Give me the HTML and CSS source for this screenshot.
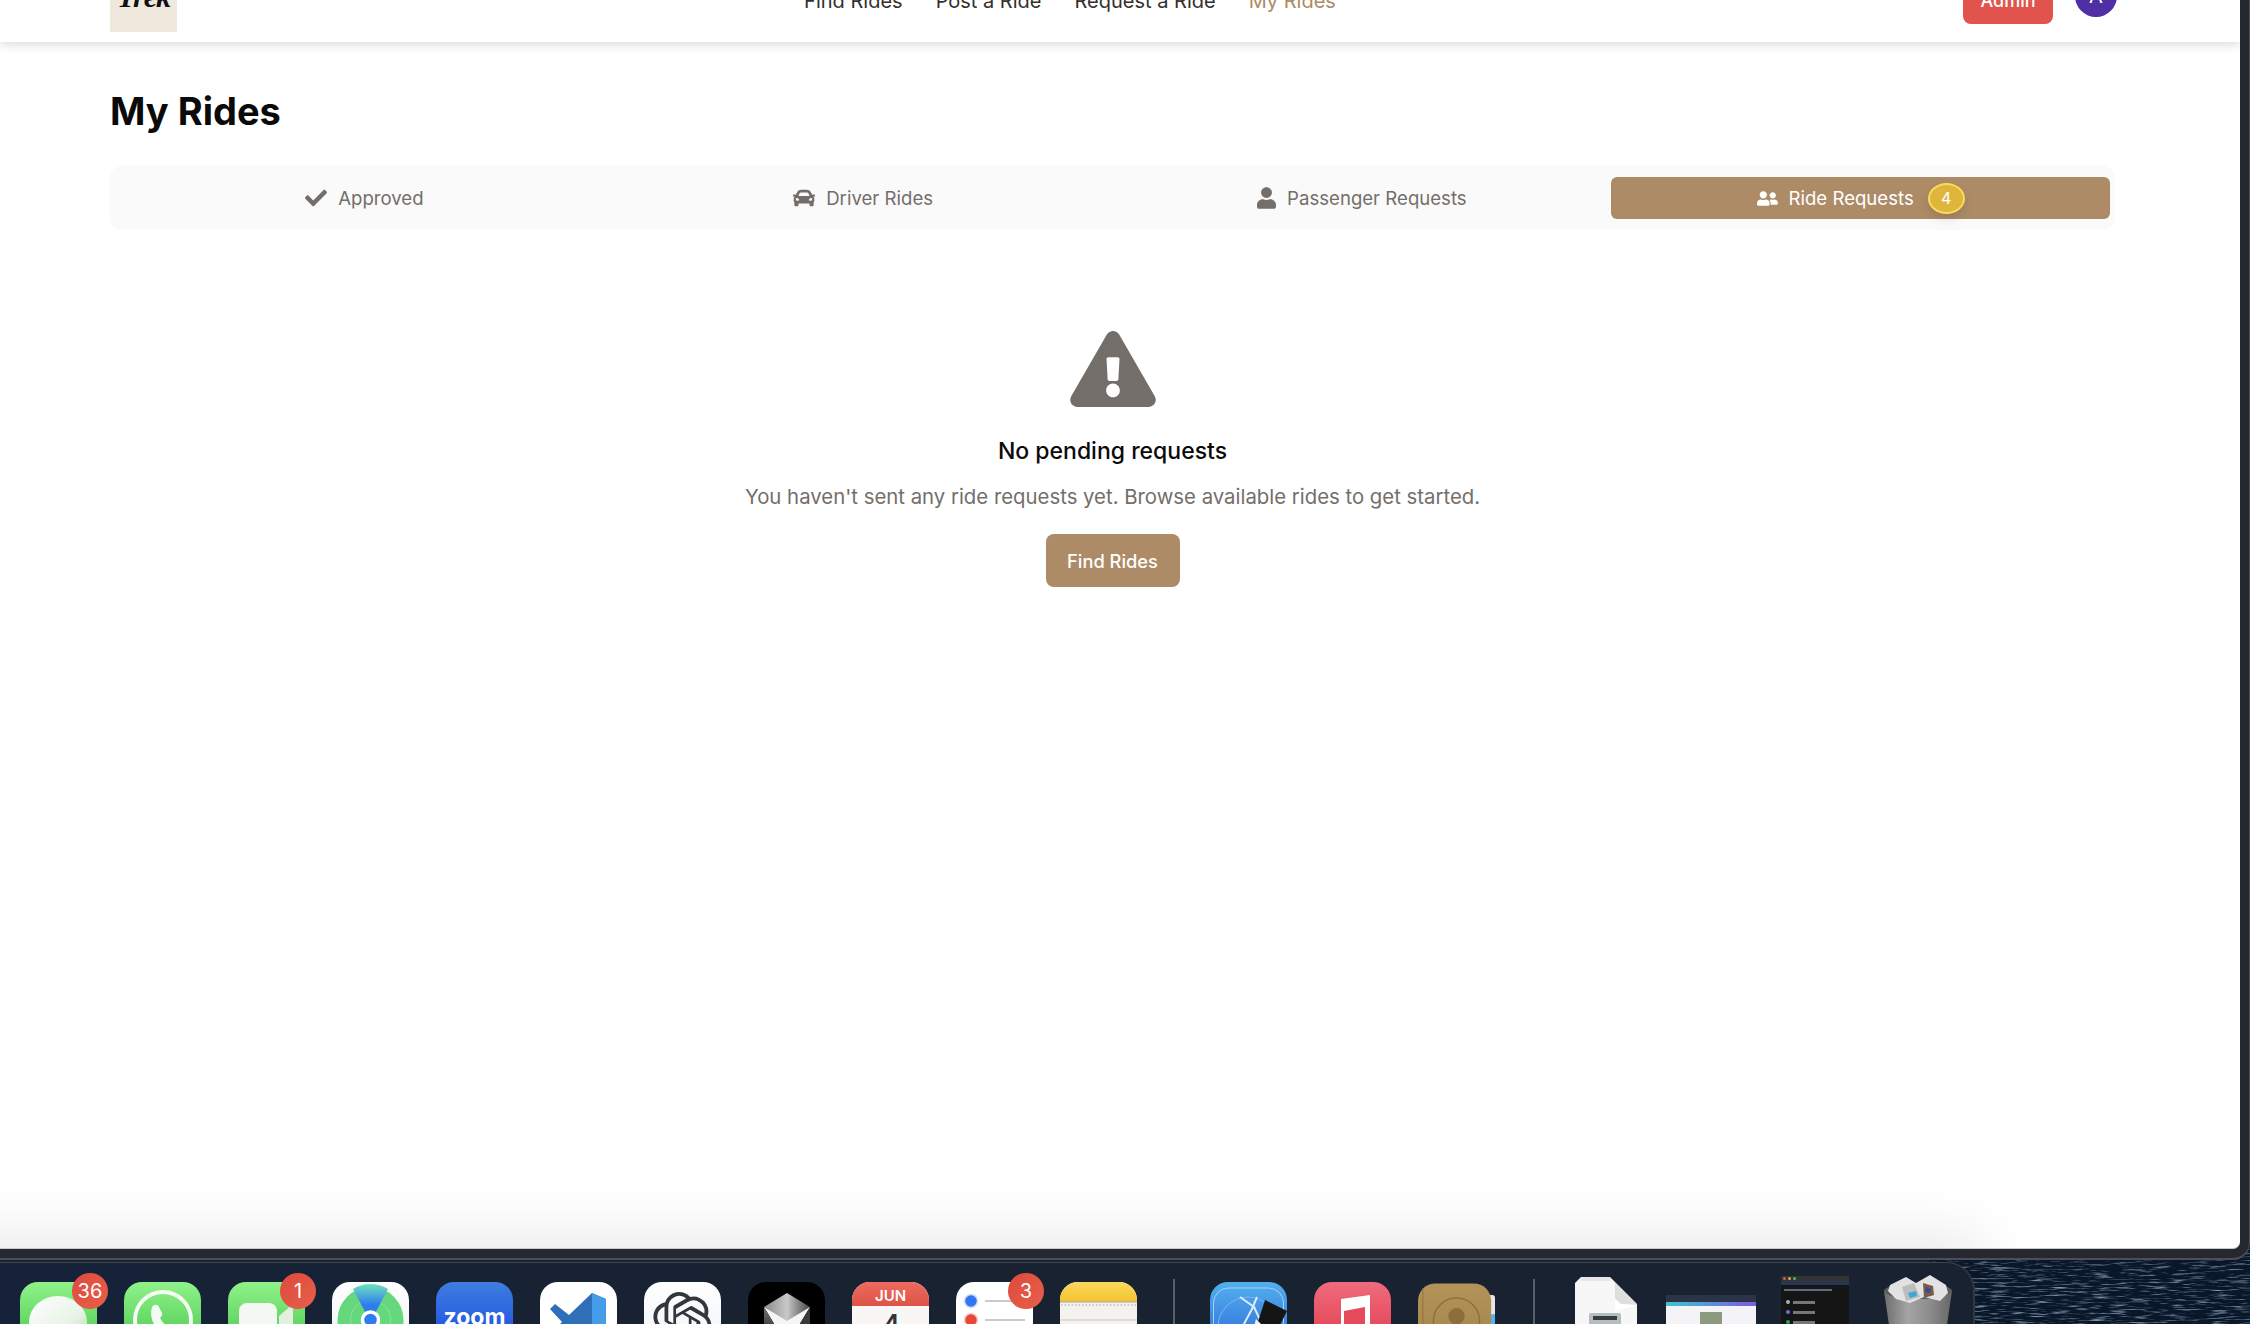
FILE: index.html
```html
<!DOCTYPE html>
<html lang="en">
<head>
<meta charset="utf-8">
<title>My Rides</title>
<link rel="stylesheet" href="styles.css">
</head>
<body>
<svg class="wallpaper" viewBox="0 0 320 80" preserveAspectRatio="none" aria-hidden="true">
  <defs>
    <filter id="water" x="0" y="0" width="100%" height="100%">
      <feTurbulence type="fractalNoise" baseFrequency="0.05 0.55" numOctaves="3" seed="7"/>
      <feColorMatrix type="matrix" values="0 0 0 0 0.36  0 0 0 0 0.5  0 0 0 0 0.66  2.2 0 0 0 -1.12"/>
    </filter>
  </defs>
  <rect width="320" height="80" fill="#0a1729"/>
  <rect width="320" height="80" filter="url(#water)"/>
</svg>

<div class="frame">
  <div class="window">
    <header class="topbar">
      <div class="logo"><span class="logo-text">Trek</span></div>
      <nav class="nav">
        <a class="nav-link">Find Rides</a>
        <a class="nav-link">Post a Ride</a>
        <a class="nav-link">Request a Ride</a>
        <a class="nav-link nav-active">My Rides</a>
      </nav>
      <div class="account">
        <button class="admin">Admin</button>
        <div class="avatar">A</div>
      </div>
    </header>

    <main class="page">
      <h1 class="title">My Rides</h1>
      <div class="tabs">
        <div class="tab">
          <svg class="tab-icon icon-check" viewBox="0 0 512 512"><path d="M173.898 439.404l-166.4-166.4c-9.997-9.997-9.997-26.206 0-36.204l36.203-36.204c9.997-10 26.207-10 36.204 0L192 312.69 432.095 72.596c9.997-9.997 26.207-9.997 36.204 0l36.203 36.204c9.997 9.997 9.997 26.206 0 36.204l-294.4 294.401c-9.998 9.997-26.207 9.997-36.204-.001z"/></svg>
          <span>Approved</span>
        </div>
        <div class="tab">
          <svg class="tab-icon icon-car" viewBox="0 0 512 512"><path d="M499.99 176h-59.87l-16.64-41.6C406.38 91.63 365.57 64 319.5 64h-127c-46.06 0-86.88 27.63-103.99 70.4L71.87 176H12.01C4.2 176-1.53 183.34.37 190.91l6 24C7.7 220.25 12.5 224 18.01 224h20.07C24.65 235.73 16 252.78 16 272v48c0 16.12 6.16 30.67 16 41.93V416c0 17.67 14.33 32 32 32h32c17.67 0 32-14.33 32-32v-32h256v32c0 17.67 14.33 32 32 32h32c17.67 0 32-14.33 32-32v-54.07c9.84-11.25 16-25.8 16-41.93v-48c0-19.22-8.65-36.27-22.07-48H494c5.51 0 10.31-3.75 11.64-9.09l6-24c1.89-7.57-3.84-14.91-11.65-14.91zm-352.06-17.83c7.29-18.22 24.94-30.17 44.57-30.17h127c19.63 0 37.28 11.95 44.57 30.17L384 208H128l19.93-49.83zM96 319.8c-19.2 0-32-12.76-32-31.9S76.8 256 96 256s48 28.71 48 47.85-28.8 15.95-48 15.95zm320 0c-19.2 0-48 3.19-48-15.95S396.8 256 416 256s32 12.76 32 31.9-12.8 31.9-32 31.9z"/></svg>
          <span>Driver Rides</span>
        </div>
        <div class="tab">
          <svg class="tab-icon icon-user" viewBox="0 0 448 512"><path d="M224 256c70.7 0 128-57.3 128-128S294.7 0 224 0 96 57.3 96 128s57.3 128 128 128zm89.6 32h-16.7c-22.2 10.2-46.9 16-72.9 16s-50.6-5.8-72.9-16h-16.7C60.2 288 0 348.2 0 422.4V464c0 26.5 21.5 48 48 48h352c26.5 0 48-21.5 48-48v-41.6c0-74.2-60.2-134.4-134.4-134.4z"/></svg>
          <span>Passenger Requests</span>
        </div>
        <div class="tab tab-active">
          <svg class="tab-icon icon-users" viewBox="0 0 640 512"><path d="M192 256c61.9 0 112-50.1 112-112S253.9 32 192 32 80 82.1 80 144s50.1 112 112 112zm76.8 32h-8.3c-20.8 10-43.9 16-68.5 16s-47.6-6-68.5-16h-8.3C51.6 288 0 339.6 0 403.2V432c0 26.5 21.5 48 48 48h288c26.5 0 48-21.5 48-48v-28.8c0-63.6-51.6-115.2-115.2-115.2zM480 256c53 0 96-43 96-96s-43-96-96-96-96 43-96 96 43 96 96 96zm48 32h-3.8c-13.9 4.8-28.6 8-44.2 8s-30.3-3.2-44.2-8H432c-20.4 0-39.2 5.9-55.7 15.4 24.4 26.3 39.7 61.2 39.7 99.8v38.4c0 2.2-.5 4.3-.6 6.4H592c26.5 0 48-21.5 48-48 0-61.9-50.1-112-112-112z"/></svg>
          <span>Ride Requests</span>
          <span class="count">4</span>
        </div>
      </div>

      <section class="empty">
        <svg class="empty-icon" viewBox="0 0 576 512"><path d="M569.517 440.013C587.975 472.007 564.806 512 527.94 512H48.054c-36.937 0-59.999-40.055-41.577-71.987L246.423 23.985c18.467-32.009 64.72-31.951 83.154 0l239.94 416.028zM288 354c-25.405 0-46 20.595-46 46s20.595 46 46 46 46-20.595 46-46-20.595-46-46-46zm-43.673-165.346l7.418 136c.347 6.364 5.609 11.346 11.982 11.346h48.546c6.373 0 11.635-4.982 11.982-11.346l7.418-136c.375-6.874-5.098-12.654-11.982-12.654h-63.383c-6.884 0-12.356 5.78-11.981 12.654z"/></svg>
        <h2 class="empty-title">No pending requests</h2>
        <p class="empty-text">You haven't sent any ride requests yet. Browse available rides to get started.</p>
        <button class="find">Find Rides</button>
      </section>
    </main>
    <div class="dock-shade"></div>
  </div>
</div>

<div class="dock">
  <div class="app">
    <svg viewBox="0 0 77 77"><defs><linearGradient id="g1" x1="0" y1="0" x2="0" y2="1"><stop offset="0" stop-color="#90f28a"/><stop offset=".6" stop-color="#5ed460"/></linearGradient><linearGradient id="w1" x1="0" y1="0" x2="1" y2="1"><stop offset="0" stop-color="#fff"/><stop offset=".6" stop-color="#e8f3e6"/><stop offset="1" stop-color="#a9d9a4"/></linearGradient></defs><rect width="77" height="77" rx="18" fill="url(#g1)"/><ellipse cx="38" cy="40" rx="29" ry="26" fill="url(#w1)"/></svg>
    <span class="badge">36</span>
  </div>
  <div class="app">
    <svg viewBox="0 0 77 77"><rect width="77" height="77" rx="18" fill="url(#g1)"/><circle cx="39" cy="38" r="28" fill="none" stroke="#f4fbf2" stroke-width="4"/><path d="M28 25c2-3 6-3 7 0l3 6c.5 2-.5 3-2 5 2 4 5 7 9 9 2-2 3-3 5-2l6 3c2 1 2 4 0 6-3 3-7 4-11 2C34 51 24 39 28 25z" fill="#f4fbf2"/></svg>
  </div>
  <div class="app">
    <svg viewBox="0 0 77 77"><rect width="77" height="77" rx="18" fill="url(#g1)"/><rect x="11" y="21" width="38" height="40" rx="8" fill="#f4f7f2"/><path d="M51 34l14-12v40L51 50z" fill="#e3efe0"/></svg>
    <span class="badge">1</span>
  </div>
  <div class="app">
    <svg viewBox="0 0 77 77"><defs><linearGradient id="w2" x1="0" y1="0" x2="0" y2="1"><stop offset="0" stop-color="#fff"/><stop offset="1" stop-color="#eee"/></linearGradient><linearGradient id="b1" x1="0" y1="0" x2="0" y2="1"><stop offset="0" stop-color="#6ee3bc"/><stop offset=".55" stop-color="#2f7cf0"/></linearGradient></defs><rect width="77" height="77" rx="18" fill="url(#w2)"/><circle cx="38.5" cy="38" r="33" fill="#65d77c"/><circle cx="38.5" cy="38" r="20" fill="none" stroke="#8be49a" stroke-width="1"/><path d="M21 7a33 33 0 0 1 35 0L38.500 40z" fill="url(#b1)"/><circle cx="38.500" cy="38" r="8" fill="#2f7cf0" stroke="#fff" stroke-width="3.500"/></svg>
  </div>
  <div class="app">
    <svg viewBox="0 0 77 77"><defs><linearGradient id="z1" x1="0" y1="0" x2="0" y2="1"><stop offset="0" stop-color="#3f7de0"/><stop offset=".7" stop-color="#1f53e2"/></linearGradient></defs><rect width="77" height="77" rx="18" fill="url(#z1)"/><text class="svg-zoom" x="38.500" y="43" text-anchor="middle">zoom</text></svg>
  </div>
  <div class="app">
    <svg viewBox="0 0 77 77"><rect width="77" height="77" rx="18" fill="#fff"/><path d="M10 27l5-5 14 11 23-22 14 6v45l-14 6-23-22-14 11-5-5 12-12z" fill="#2f6fb8"/><path d="M52 11l14 6v45l-14 6z" fill="#459ce8"/></svg>
  </div>
  <div class="app">
    <svg viewBox="0 0 77 77"><defs><linearGradient id="w3" x1="0" y1="0" x2="0" y2="1"><stop offset="0" stop-color="#fff"/><stop offset="1" stop-color="#eef1f6"/></linearGradient></defs><rect width="77" height="77" rx="18" fill="url(#w3)"/><path transform="translate(9 10) scale(2.45)" fill="#33363b" d="M22.2819 9.8211a5.9847 5.9847 0 0 0-.5157-4.9108 6.0462 6.0462 0 0 0-6.5098-2.9A6.0651 6.0651 0 0 0 4.9807 4.1818a5.9847 5.9847 0 0 0-3.9977 2.9 6.0462 6.0462 0 0 0 .7427 7.0966 5.98 5.98 0 0 0 .511 4.9107 6.051 6.051 0 0 0 6.5146 2.9001A5.9847 5.9847 0 0 0 13.2599 24a6.0557 6.0557 0 0 0 5.7718-4.2058 5.9894 5.9894 0 0 0 3.9977-2.9001 6.0557 6.0557 0 0 0-.7475-7.0729zm-9.022 12.6081a4.4755 4.4755 0 0 1-2.8764-1.0408l.1419-.0804 4.7783-2.7582a.7948.7948 0 0 0 .3927-.6813v-6.7369l2.02 1.1686a.071.071 0 0 1 .038.052v5.5826a4.504 4.504 0 0 1-4.4945 4.4944zm-9.6607-4.1254a4.4708 4.4708 0 0 1-.5346-3.0137l.142.0852 4.783 2.7582a.7712.7712 0 0 0 .7806 0l5.8428-3.3685v2.3324a.0804.0804 0 0 1-.0332.0615L9.74 19.9502a4.4992 4.4992 0 0 1-6.1408-1.6464zM2.3408 7.8956a4.485 4.485 0 0 1 2.3655-1.9728V11.6a.7664.7664 0 0 0 .3879.6765l5.8144 3.3543-2.0201 1.1685a.0757.0757 0 0 1-.071 0l-4.8303-2.7865A4.504 4.504 0 0 1 2.3408 7.872zm16.5963 3.8558L13.1038 8.364 15.1192 7.2a.0757.0757 0 0 1 .071 0l4.8303 2.7913a4.4944 4.4944 0 0 1-.6765 8.1042v-5.6772a.79.79 0 0 0-.407-.667zm2.0107-3.0231l-.142-.0852-4.7735-2.7818a.7759.7759 0 0 0-.7854 0L9.409 9.2297V6.8974a.0662.0662 0 0 1 .0284-.0615l4.8303-2.7866a4.4992 4.4992 0 0 1 6.6802 4.66zM8.3065 12.863l-2.02-1.1638a.0804.0804 0 0 1-.038-.0567V6.0742a4.4992 4.4992 0 0 1 7.3757-3.4537l-.142.0805L8.704 5.459a.7948.7948 0 0 0-.3927.6813zm1.0976-2.3654l2.602-1.4998 2.6069 1.4998v2.9994l-2.5974 1.4997-2.6067-1.4997Z"/></svg>
  </div>
  <div class="app">
    <svg viewBox="0 0 77 77"><defs><linearGradient id="k1" x1="0" y1="0" x2="1" y2="0"><stop offset="0" stop-color="#8b8b8b"/><stop offset=".5" stop-color="#c8c8c8"/><stop offset="1" stop-color="#444"/></linearGradient><linearGradient id="k2" x1="0" y1="0" x2="0" y2="1"><stop offset="0" stop-color="#777"/><stop offset="1" stop-color="#222"/></linearGradient></defs><rect width="77" height="77" rx="18" fill="#000"/><path d="M39 11L16 25l23 17 23-17z" fill="url(#k1)"/><path d="M16 25l23 14 23-14-12 20H28z" fill="#f5f5f5"/><path d="M16 25l12 20 11 10-23-8z" fill="url(#k2)"/><path d="M62 25L50 45 39 55l23-8z" fill="#3a3a3a"/></svg>
  </div>
  <div class="app">
    <svg viewBox="0 0 77 77"><defs><linearGradient id="r1" x1="0" y1="0" x2="0" y2="1"><stop offset="0" stop-color="#ee6a5f"/><stop offset="1" stop-color="#dd5347"/></linearGradient></defs><rect width="77" height="77" rx="18" fill="#f8f7f6"/><path d="M0 24V18A18 18 0 0 1 18 0h41a18 18 0 0 1 18 18v6z" fill="url(#r1)"/><text class="svg-month" x="38.500" y="19" text-anchor="middle">JUN</text><text class="svg-day" x="38.500" y="58" text-anchor="middle">4</text></svg>
  </div>
  <div class="app">
    <svg viewBox="0 0 77 77"><rect width="77" height="77" rx="18" fill="#fff"/><circle cx="15" cy="19" r="6.500" fill="#2f76f0" stroke="#cfe0fb" stroke-width="1.500"/><circle cx="15" cy="38" r="6.500" fill="#e8483a" stroke="#f8cfcb" stroke-width="1.500"/><path d="M29 19h40M29 38h40" stroke="#b9b9b9" stroke-width="1.500"/></svg>
    <span class="badge">3</span>
  </div>
  <div class="app">
    <svg viewBox="0 0 77 77"><defs><linearGradient id="y1" x1="0" y1="0" x2="0" y2="1"><stop offset="0" stop-color="#fbd95c"/><stop offset="1" stop-color="#f5c32f"/></linearGradient></defs><rect width="77" height="77" rx="18" fill="#f4f2ef"/><path d="M0 20A18 18 0 0 1 18 0h41a18 18 0 0 1 18 18v2z" fill="url(#y1)"/><path d="M0 20h77" stroke="#a9a9a9" stroke-width="1"/><path d="M1 23h75" stroke="#bdbdbd" stroke-width="1.500" stroke-dasharray="1.500 2"/><path d="M0 38h77" stroke="#dedcd9" stroke-width="2"/></svg>
  </div>
  <div class="sep sep-first"></div>
  <div class="app">
    <svg viewBox="0 0 77 77"><defs><linearGradient id="x1" x1="0" y1="0" x2="0" y2="1"><stop offset="0" stop-color="#52b0ee"/><stop offset=".7" stop-color="#3576dc"/></linearGradient></defs><rect width="77" height="77" rx="18" fill="url(#x1)"/><rect x="3.500" y="6" width="70" height="70" rx="15" fill="none" stroke="#a5d3f5" stroke-width="1"/><circle cx="38" cy="45" r="30" fill="none" stroke="#7fb6ec" stroke-width="1"/><path d="M30 15l14 10 14 30M47 15L42 27 27 55" fill="none" stroke="#dcecfb" stroke-width="2"/><path d="M56 19l22 11-11 22-6 3-14-8z" fill="#151515" transform="translate(-1 -1)"/><path d="M46 37l6 6-4 11-6-3z" fill="#eee"/></svg>
  </div>
  <div class="app">
    <svg viewBox="0 0 77 77"><defs><linearGradient id="m1" x1="0" y1="0" x2="0" y2="1"><stop offset="0" stop-color="#ef6b7d"/><stop offset=".6" stop-color="#e54a5c"/></linearGradient></defs><rect width="77" height="77" rx="18" fill="url(#m1)"/><path d="M27 17l29-4v50H27z" fill="#fff"/><path d="M30 29l21-4v40H30z" fill="#e54a5c"/></svg>
  </div>
  <div class="app">
    <svg viewBox="0 0 80 77"><defs><linearGradient id="c1" x1="0" y1="0" x2="0" y2="1"><stop offset="0" stop-color="#b39358"/><stop offset="1" stop-color="#a4824a"/></linearGradient></defs><rect x="70" y="12" width="10" height="22" rx="3" fill="#e7e6e2"/><rect x="70" y="32" width="10" height="24" fill="#56b1f0"/><rect width="76" height="77" rx="18" fill="url(#c1)"/><path d="M5 5v68" stroke="#8f713d" stroke-width="1"/><circle cx="40" cy="39" r="24" fill="none" stroke="#8c6e3c" stroke-width="1.500"/><circle cx="40" cy="34" r="8.500" fill="#8c6e3c"/></svg>
  </div>
  <div class="sep sep-second"></div>
  <div class="doc">
    <svg viewBox="0 0 62 70"><path d="M6 2h29l27 27v41H0V8z" fill="#f7f7f7"/><path d="M6 2h29v4H6z" fill="#e6e6e6"/><path d="M40 8l22 22-16-1-6-5z" fill="#dedede"/><path d="M40 24l6 5 16 1-22 6z" fill="#fff"/><rect x="14" y="38" width="32" height="32" rx="2" fill="#b4bdbf"/><rect x="18" y="41" width="24" height="4" fill="#3a3d40"/></svg>
  </div>
  <div class="thumb-light">
    <div class="thumb-bar"></div>
    <div class="thumb-strip"></div>
    <div class="thumb-body"><div class="thumb-map"></div></div>
  </div>
  <div class="thumb-dark">
    <div class="dark-title"><i class="dot dot-r"></i><i class="dot dot-y"></i><i class="dot dot-g"></i></div>
    <div class="dark-url"></div>
    <div class="dark-line"></div>
    <div class="dark-row"><i class="dark-dot dot-a"></i><i class="dark-text"></i></div>
    <div class="dark-row"><i class="dark-dot dot-b"></i><i class="dark-text"></i></div>
    <div class="dark-row"><i class="dark-dot dot-c"></i><i class="dark-text"></i></div>
  </div>
  <div class="trash">
    <svg viewBox="0 0 68 50"><defs><linearGradient id="t1" x1="0" y1="0" x2="1" y2="0"><stop offset="0" stop-color="#6d6d6d"/><stop offset=".35" stop-color="#a4a4a4"/><stop offset=".7" stop-color="#8a8a8a"/><stop offset="1" stop-color="#666"/></linearGradient></defs><path d="M0 16h68l-5 34H5z" fill="url(#t1)"/><ellipse cx="34" cy="16" rx="34" ry="8" fill="#5d5d5d"/><path d="M6 10l16-8 10 6 14-8 16 10 2 8-8 8-16-4-14 6-14-4-8-8z" fill="#e2e2e2"/><path d="M18 12l12-4 6 14-14 4z" fill="#bdbdbd"/><path d="M24 18l8-2 1 5-7 2z" fill="#3fa7d6"/><path d="M39 8l10 3 1 9-10 3z" fill="#7c5a44"/><path d="M42 12l5 2-1 4-5-1z" fill="#2f4f9a"/></svg>
  </div>
</div>
</body>
</html>
```

FILE: styles.css
```css
* { box-sizing: border-box; }
html, body { margin: 0; padding: 0; }
body {
  position: relative;
  width: 2250px;
  height: 1324px;
  overflow: hidden;
  background: #1a2230;
  font-family: Inter, "Noto Sans", sans-serif;
}
.wallpaper {
  position: absolute;
  right: 0;
  bottom: 0;
  width: 320px;
  height: 80px;
}

/* Browser window and its frame */
.frame {
  position: relative;
  height: 1260px;
  padding: 0 9px 9px 0;
  background: #262831;
  border-bottom: 2px solid #4c4e58;
  border-right: 1px solid #4c4e58;
  border-bottom-right-radius: 17px;
}
.window {
  position: relative;
  height: 1249px;
  overflow: hidden;
  background: #fff;
  border-bottom: 1px solid #c9c9c9;
  border-bottom-right-radius: 7px;
}
.dock-shade {
  position: absolute;
  left: -60px;
  bottom: -24px;
  width: 2040px;
  height: 24px;
  border-radius: 30px;
  box-shadow: 0 0 58px 6px rgba(0, 0, 0, .13);
}

/* Top bar, scrolled partly out of view */
.topbar {
  position: relative;
  z-index: 1;
  display: flex;
  align-items: center;
  justify-content: space-between;
  height: 87px;
  margin-top: -45px;
  padding: 0 123px 0 110px;
  background: #fff;
  box-shadow: 0 2px 10px rgba(0, 0, 0, .16);
}
.logo {
  display: flex;
  align-items: flex-end;
  justify-content: center;
  width: 67px;
  height: 67px;
  padding-bottom: 20px;
  background: #efe9dd;
}
.logo-text {
  font: italic 700 30px/1 "Liberation Serif", serif;
  color: #111;
  letter-spacing: -1px;
}
.nav { display: flex; gap: 33px; margin-top: 5px; }
.nav-link { font-size: 20px; line-height: 24px; color: #33302d; }
.nav-active { color: #ad8b67; }
.account { display: flex; align-items: center; gap: 22px; }
.admin {
  width: 90px;
  height: 51px;
  padding: 4px 0 0;
  border: 0;
  border-radius: 8px;
  background: #e0544d;
  color: #fff;
  font: 500 18px Inter, sans-serif;
}
.avatar {
  display: flex;
  align-items: center;
  justify-content: center;
  width: 42px;
  height: 42px;
  margin-bottom: 5px;
  border-radius: 50%;
  background: #4f2ea6;
  color: #fff;
  font-size: 20px;
}

/* Page */
.page { width: 2115px; padding-left: 110px; }
.title {
  margin: 47px 0 33px;
  font-size: 38px;
  line-height: 44px;
  font-weight: 700;
  color: #0c0a09;
}
.tabs {
  display: grid;
  grid-template-columns: repeat(4, 1fr);
  height: 64px;
  padding: 11px 5px;
  border-radius: 12px;
  background: #fafafa;
}
.tab {
  display: flex;
  align-items: center;
  justify-content: center;
  gap: 11px;
  border-radius: 6px;
  font-size: 18.6px;
  font-weight: 400;
  color: #736e69;
}
.tab-icon { fill: currentColor; display: block; }
.icon-check { width: 22px; height: 22px; }
.icon-car { width: 22px; height: 22px; }
.icon-user { width: 19px; height: 22px; }
.icon-users { width: 21px; height: 17px; }
.tab-active { background: #ad8b67; color: #fff; }
.count {
  display: flex;
  align-items: center;
  justify-content: center;
  width: 37px;
  height: 31px;
  margin-left: 3px;
  border: 2px solid #f6dc5c;
  border-radius: 50%;
  background: #e0b53c;
  box-shadow: 0 6px 10px rgba(0, 0, 0, .1);
  color: #fff;
  font-size: 16px;
}

/* Empty state */
.empty {
  display: flex;
  flex-direction: column;
  align-items: center;
  padding-top: 101px;
}
.empty-icon { display: block; width: 86px; height: 76px; fill: #736e69; }
.empty-title {
  margin: 28px 0 0;
  font-size: 23px;
  line-height: 32px;
  font-weight: 500;
  color: #0c0a09;
}
.empty-text {
  margin: 15px 0 0;
  font-size: 20.35px;
  line-height: 30px;
  color: #736e69;
}
.find {
  width: 134px;
  height: 53px;
  margin-top: 22px;
  border: 0;
  border-radius: 8px;
  background: #ad8b67;
  color: #fff;
  font: 500 18.3px Inter, sans-serif;
}

/* Dock */
.dock {
  position: relative;
  display: flex;
  align-items: flex-start;
  width: 1975px;
  height: 62px;
  margin-top: 2px;
  padding: 19px 0 0 20px;
  gap: 27px;
  overflow: hidden;
  background: linear-gradient(90deg, #152238, #192230 45%);
  border-top: 1px solid #3d4450;
  border-right: 2px solid #2f3744;
  border-top-right-radius: 28px;
}
.app { position: relative; flex: none; width: 77px; height: 77px; }
.app svg { display: block; width: 100%; height: 100%; overflow: visible; }
.badge {
  position: absolute;
  top: -9px;
  right: -11px;
  display: flex;
  align-items: center;
  justify-content: center;
  width: 36px;
  height: 36px;
  border-radius: 50%;
  background: linear-gradient(135deg, #dd4a3c, #e8604a);
  color: #fff;
  font-size: 20px;
}
.svg-zoom { font: 700 23px Inter, sans-serif; fill: #fff; }
.svg-month { font: 600 15px Inter, sans-serif; fill: #fff; }
.svg-day { font: 400 36px Inter, sans-serif; fill: #333; }
.sep { flex: none; width: 2px; height: 60px; margin-top: -3px; background: #5a606b; }
.sep-first { margin-left: 9px; margin-right: 8px; }
.sep-second { margin-left: 11px; margin-right: 13px; }
.doc { flex: none; width: 62px; height: 70px; margin-top: -7px; }
.doc svg { display: block; width: 100%; height: 100%; }
.thumb-light {
  flex: none;
  width: 90px;
  height: 60px;
  margin-top: 13px;
  margin-left: 2px;
  background: #f4f4f8;
  filter: blur(.4px);
}
.thumb-bar { height: 7px; background: #2b3447; }
.thumb-strip { height: 4px; background: linear-gradient(90deg, #3fc4cf, #7b5ce0); }
.thumb-body { display: flex; justify-content: center; padding-top: 6px; }
.thumb-map { width: 22px; height: 40px; background: #8d9a7d; }
.thumb-dark {
  flex: none;
  width: 68px;
  height: 60px;
  margin: -6px 8px 0 -2px;
  background: #151515;
  filter: blur(.4px);
}
.dark-title { display: flex; gap: 2px; height: 5px; padding: 1px 2px; background: #333; }
.dot { width: 3px; height: 3px; border-radius: 50%; }
.dot-r { background: #d8584f; }
.dot-y { background: #d6b13f; }
.dot-g { background: #5cb85c; }
.dark-url { height: 4px; background: #2a3550; }
.dark-line { width: 48px; height: 2px; margin: 4px 0 6px 3px; background: #5d6a80; }
.dark-row { display: flex; align-items: center; gap: 3px; height: 10px; padding-left: 5px; }
.dark-dot { width: 4px; height: 4px; border-radius: 50%; }
.dot-a { background: #9bb7c4; }
.dot-b { background: #6a72e0; }
.dot-c { background: #2f9b6d; }
.dark-text { width: 22px; height: 3px; background: #777; }
.trash { flex: none; width: 68px; height: 50px; margin-top: -7px; }
.trash svg { display: block; width: 100%; height: 100%; }
```
